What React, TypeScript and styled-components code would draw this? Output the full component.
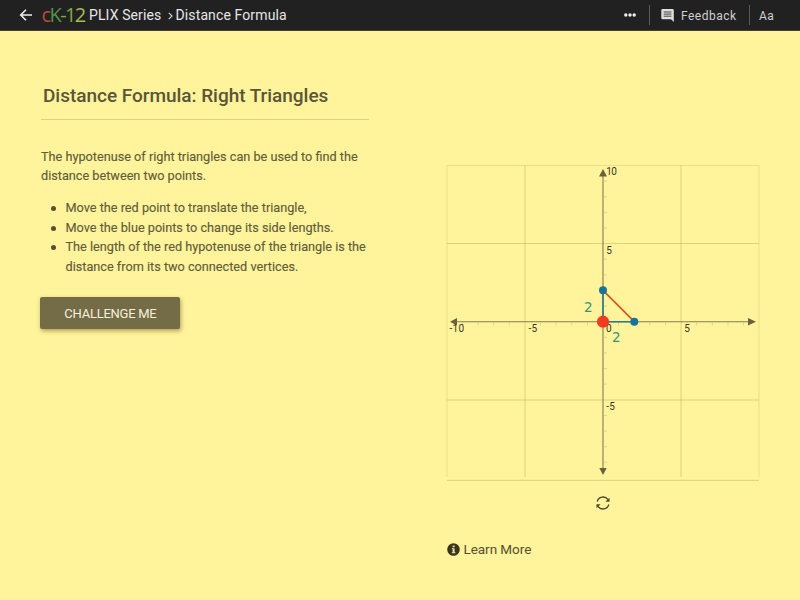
import React from "react";
import styled, { createGlobalStyle } from "styled-components";

const GlobalStyle = createGlobalStyle`
  * { box-sizing: border-box; }
  body { margin: 0; background: #fff49b; font-family: Roboto, "Liberation Sans", sans-serif; color: #5c532f; }
`;

const Page = styled.div`
  width: 800px;
  height: 600px;
  overflow: hidden;
  background: #fff49b;
`;

const TopBar = styled.header`
  height: 31px;
  display: flex;
  align-items: center;
  justify-content: space-between;
  background: #222122;
  border-bottom: 1px solid #45412f;
  padding: 0 26px 0 19px;
  white-space: nowrap;
`;

const Group = styled.div`
  display: flex;
  align-items: center;
  height: 30px;
`;

const Logo = styled.span`
  font: 20px/30px "Open Sans", sans-serif;
  letter-spacing: -1.6px;
  width: 47.5px;
  margin: 0 0 0 8.5px;
`;

const LogoPart = styled.span<{ $color: string }>`
  color: ${(p) => p.$color};
`;

const Crumb = styled.span<{ $width: number }>`
  width: ${(p) => p.$width}px;
  font-size: 14px;
  line-height: 30px;
  letter-spacing: 0.12px;
  color: #e6e6e6;
`;

const Chevron = styled.svg`
  margin: 2px 3px 0 5.5px;
`;

const Divider = styled.span<{ $before: number; $after: number }>`
  width: 1px;
  height: 20px;
  background: #5a5a5a;
  margin: 0 ${(p) => p.$after}px 0 ${(p) => p.$before}px;
`;

const Action = styled.span<{ $width: number; $indent?: number }>`
  width: ${(p) => p.$width}px;
  margin-left: ${(p) => p.$indent ?? 0}px;
  color: #cfcfcf;
  font-size: 12px;
  letter-spacing: 0.5px;
  line-height: 30px;
  padding-top: 1px;
`;

const Content = styled.main`
  display: grid;
  grid-template-columns: 328px 312px;
  column-gap: 78px;
  padding-left: 41px;
`;

const Lesson = styled.section`
  padding-top: 53px;
`;

const Title = styled.h1`
  height: 36px;
  margin: 0 0 26.5px;
  padding-left: 2px;
  border-bottom: 1px solid #ddd184;
  font-size: 19px;
  line-height: 24px;
  font-weight: 500;
  letter-spacing: -0.03px;
  white-space: nowrap;
  color: #5a5438;
`;

const Copy = styled.div`
  font-size: 12.7px;
  line-height: 19.5px;
  white-space: nowrap;
  color: #625c3b;
  -webkit-text-stroke: 0.15px #625c3b;
`;

const Intro = styled.p`
  margin: 0 0 12.5px;
`;

const Steps = styled.ul`
  list-style: none;
  margin: 0;
  padding: 0;
`;

const Step = styled.li`
  display: flex;
  &::before {
    content: "";
    width: 5px;
    height: 5px;
    border-radius: 50%;
    background: #574f30;
    margin: 8px 9.5px 0 10px;
    flex: none;
  }
`;

const Challenge = styled.button`
  display: block;
  width: 140px;
  height: 32px;
  margin: 21px 0 0 -0.6px;
  padding: 1px 0 0;
  border: 0;
  border-radius: 2px;
  background: #746c47;
  box-shadow: 1px 2px 4px rgba(90, 80, 30, 0.5);
  color: #f5f1dc;
  font: 13px/30px Roboto, sans-serif;
  letter-spacing: -0.25px;
`;

const Activity = styled.section`
  padding-top: 129px;
  display: flex;
  flex-direction: column;
`;

const Plot = styled.svg`
  display: block;
  overflow: visible;
  flex: none;
`;

const Controls = styled.div`
  height: 60px;
  padding-top: 15px;
  display: flex;
  justify-content: center;
  align-items: flex-start;
`;

const LearnMore = styled.div`
  display: flex;
  align-items: center;
  height: 16px;
  gap: 3.5px;
  font-size: 13.5px;
  letter-spacing: -0.05px;
  color: #574f30;
`;

const UNIT = 15.62;
const CX = 156;
const CY = 161.7;
const TOP = 130.3;
const ticks = [-9, -8, -7, -6, -4, -3, -2, -1, 1, 2, 3, 4, 6, 7, 8, 9];
const labels: [string, number, number, number][] = [
  ["10", 159.3, 15, 10.5],
  ["5", 159.3, 93.5, 5.5],
  ["-5", 159.3, 249.7, 8.5],
  ["-10", 2.5, 171.7, 14.5],
  ["-5", 81.5, 171.7, 8.5],
  ["0", 159, 171.7, 5.5],
  ["5", 237.3, 171.7, 5.5],
];

function CoordinatePlane() {
  return (
    <Plot width="312" height="321" viewBox="0 0 312 321">
      <g stroke="#bdb05d" strokeOpacity="0.5" strokeWidth="1">
        {[78, 234].map((x) => <line key={x} x1={x} x2={x} y1="5" y2="317" />)}
        {[83.5, 240].map((y) => <line key={y} x1="0" x2="312" y1={y} y2={y} />)}
      </g>
      <g stroke="#c8bb6a" strokeOpacity="0.45" strokeWidth="0.8">
        <line x1="0" x2="0" y1="5.5" y2="317" />
        <line x1="312" x2="312" y1="5.5" y2="317" />
        <line x1="0" x2="312" y1="5.5" y2="5.5" />
      </g>
      <line x1="0" x2="312" y1="320.3" y2="320.3" stroke="#dccf7e" />
      <g stroke="#a99d55" strokeOpacity="0.35" strokeWidth="1">
        {ticks.map((t) => (
          <React.Fragment key={t}>
            <line x1={CX + t * UNIT} x2={CX + t * UNIT} y1={CY + 1} y2={CY + 4} />
            <line x1={CX + 1} x2={CX + 4} y1={CY - t * UNIT} y2={CY - t * UNIT} />
          </React.Fragment>
        ))}
      </g>
      <g stroke="#857b50" strokeWidth="1.1">
        <line x1="6" x2="305" y1={CY} y2={CY} />
        <line x1={CX} x2={CX} y1="12" y2="311" />
      </g>
      <path d={`M3 ${CY} l7-3.7v7.4z M309 ${CY} l-8-3.7v7.4z M${CX} 9 l-4 7.5h8z M${CX} 315 l-3.7-7h7.4z`} fill="#6a613f" />
      <g fontFamily="Roboto, sans-serif" fontSize="10" fill="#39341f">
        {labels.map(([text, x, y, length]) => (
          <text key={`${x}-${y}`} x={x} y={y} textLength={length}>{text}</text>
        ))}
      </g>
      <path d={`M${CX} ${TOP} V${CY} H187.3`} fill="none" stroke="#287c91" strokeWidth="1.6" />
      <line x1={CX} y1={TOP} x2="187.3" y2={CY} stroke="#cf5b20" strokeWidth="1.7" />
      <g fontFamily='"DejaVu Sans", sans-serif' fontSize="13.5" fill="#40917c">
        <text x="137" y="152">2</text>
        <text x="165" y="181.7">2</text>
      </g>
      <circle cx={CX} cy={TOP} r="4" fill="#17739b" />
      <circle cx="187.3" cy={CY} r="4" fill="#17739b" />
      <circle cx={CX} cy={CY} r="6.1" fill="#f33b20" />
    </Plot>
  );
}

export default function App() {
  return (
    <Page>
      <GlobalStyle />
      <TopBar>
        <Group>
          <svg width="14" height="14" viewBox="0 0 14 14" fill="none" stroke="#eee" strokeWidth="1.6">
            <path d="M13 7H2M7 1.7 1.7 7 7 12.3" />
          </svg>
          <Logo>
            <LogoPart $color="#b64b36">c</LogoPart>
            <LogoPart $color="#4f9446">K</LogoPart>
            <LogoPart $color="#7eaa43">-1</LogoPart>
            <LogoPart $color="#a4bd4c">2</LogoPart>
          </Logo>
          <Crumb $width={73}>PLIX Series</Crumb>
          <Chevron width="5" height="8" viewBox="0 0 5 8" fill="none" stroke="#d0d0d0" strokeWidth="1.2">
            <path d="m.8.8 3.2 3.2L.8 7.2" />
          </Chevron>
          <Crumb $width={112}>Distance Formula</Crumb>
        </Group>
        <Group>
          <svg width="12" height="4" viewBox="0 0 12 4" fill="#eee">
            <circle cx="1.8" cy="2" r="1.7" />
            <circle cx="6" cy="2" r="1.7" />
            <circle cx="10.2" cy="2" r="1.7" />
          </svg>
          <Divider $before={13} $after={11} />
          <svg width="13" height="13" viewBox="0 0 13 13">
            <path d="M1.5 0h10q1.3 0 1.3 1.3V13L10 10.2H1.5Q.3 10.2.3 9V1.3Q.3 0 1.5 0Z" fill="#ddd" />
            <path d="M2.7 3h7.7M2.7 5.1h7.7M2.7 7.2h7.7" stroke="#444" />
          </svg>
          <Action $width={55} $indent={7}>Feedback</Action>
          <Divider $before={13} $after={9} />
          <Action $width={15}>Aa</Action>
        </Group>
      </TopBar>
      <Content>
        <Lesson>
          <Title>Distance Formula: Right Triangles</Title>
          <Copy>
            <Intro>
              The hypotenuse of right triangles can be used to find the
              <br />
              distance between two points.
            </Intro>
            <Steps>
              <Step>Move the red point to translate the triangle,</Step>
              <Step>Move the blue points to change its side lengths.</Step>
              <Step>
                <span>
                  The length of the red hypotenuse of the triangle is the
                  <br />
                  distance from its two connected vertices.
                </span>
              </Step>
            </Steps>
          </Copy>
          <Challenge>CHALLENGE ME</Challenge>
        </Lesson>
        <Activity>
          <CoordinatePlane />
          <Controls>
            <svg width="14" height="14" viewBox="0 0 14 14" fill="none" stroke="#4d4629" strokeWidth="1.3">
              <path d="M1.2 5.5A6 6 0 0 1 12 3.7M12.8 8.5A6 6 0 0 1 2 10.3" />
              <path d="M13.5 1.8v4H9.5zM.5 12.2v-4h4z" fill="#4d4629" stroke="none" />
            </svg>
          </Controls>
          <LearnMore>
            <svg width="13" height="13" viewBox="0 0 13 13">
              <circle cx="6.5" cy="6.5" r="6.3" fill="#39341f" />
              <path d="M5.6 2.4h2v1.8h-2zM4.8 5.3h2.8v4h.8v1H4.8v-1h.8v-3h-.8z" fill="#e9df9a" />
            </svg>
            Learn More
          </LearnMore>
        </Activity>
      </Content>
    </Page>
  );
}
